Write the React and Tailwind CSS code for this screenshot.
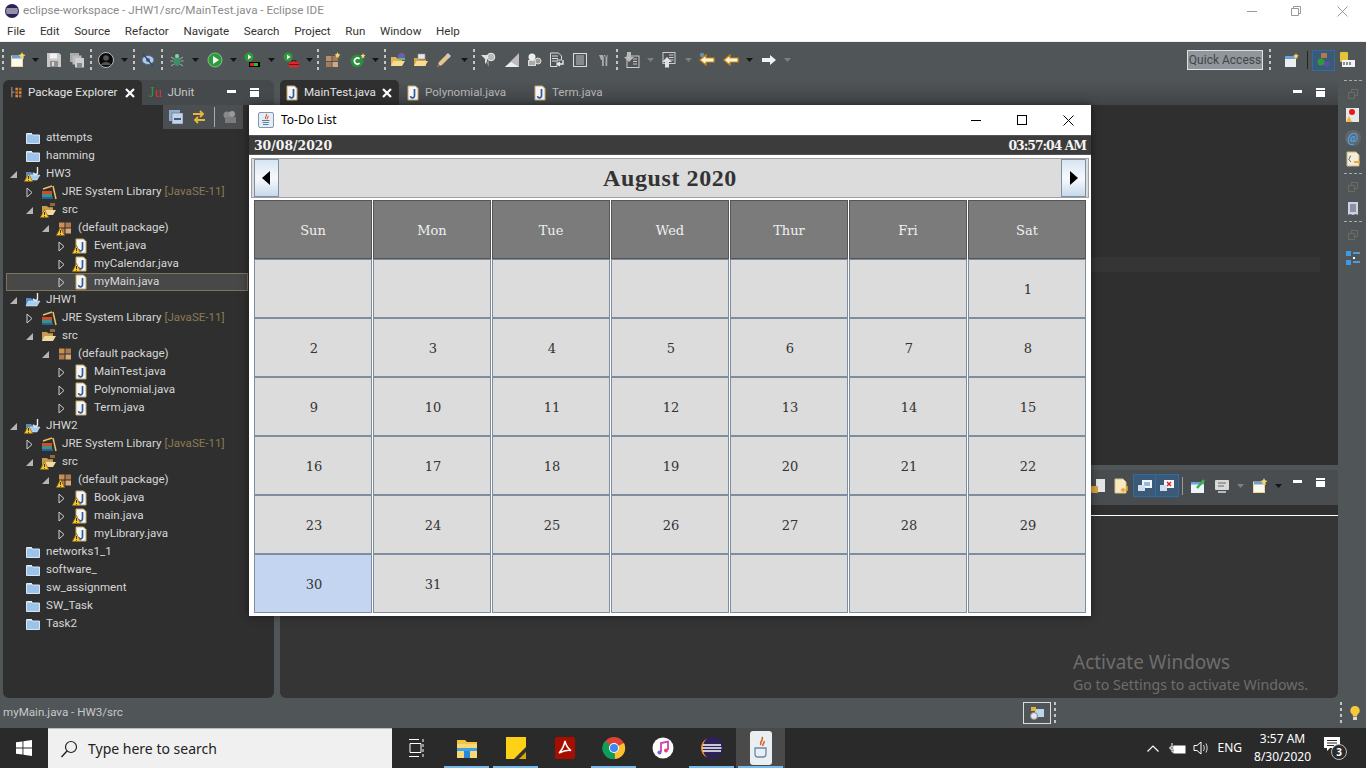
import React from 'react';

// --- small toolbar / tree icons ---
const Svg = ({ children, s = 16 }) => (
  <svg width={s} height={s} viewBox="0 0 16 16" className="block shrink-0">{children}</svg>
);

const NewWin = () => <Svg><rect x="1.5" y="4" width="11" height="10.5" fill="#fdf9e8" stroke="#e8d9a0" /><rect x="2" y="4" width="10" height="2.5" fill="#6aa0dc" /><path d="M12 0l1 2.2L15.5 3 13.4 4.5 14 7l-2-1.4L10 7l.6-2.5L8.5 3l2.500-.8z" fill="#f5d76e" /></Svg>;
const Save = () => <Svg><path d="M1 1h12l2 2v12H1z" fill="#c9c9c9" /><rect x="4" y="1.500" width="7" height="5" fill="#f2f2f2" /><rect x="4" y="9" width="8" height="6" fill="#8f8f8f" /><rect x="6" y="10" width="2" height="4" fill="#ddd" /></Svg>;
const SaveAll = () => <Svg><rect x="1" y="1" width="9" height="9" fill="#aaa" /><rect x="3.500" y="3.500" width="9" height="9" fill="#bbb" /><path d="M6 6h9v9.500H6z" fill="#cfcfcf" /><rect x="8" y="11" width="5" height="4.500" fill="#8a8a8a" /></Svg>;
const User = () => <Svg><circle cx="8" cy="8" r="7.500" fill="#0c0c0c" stroke="#bbb" /><circle cx="8" cy="6" r="2.800" fill="#555" /><path d="M3 13c1-4 9-4 10 0z" fill="#555" /></Svg>;
const Skip = () => <Svg><ellipse cx="8" cy="8" rx="6" ry="4.500" fill="#b9c9e0" stroke="#44658f" /><circle cx="8" cy="8" r="2" fill="#44658f" /><path d="M3 2l10 12" stroke="#2a4a78" strokeWidth="1.300" /></Svg>;
const Bug = () => <Svg><ellipse cx="8" cy="9" rx="3.500" ry="5" fill="#3f8f6a" /><circle cx="8" cy="4" r="2" fill="#8fd0a8" /><path d="M2 5l3 2M14 5l-3 2M1.500 9H4M14.500 9H12M2 14l3-2M14 14l-3-2" stroke="#9fb8a8" /></Svg>;
const Run = () => <Svg><circle cx="8" cy="8" r="7" fill="#2f9a3c" stroke="#7bc47f" /><path d="M6 4l6 4-6 4z" fill="#f3f3f3" /></Svg>;
const Coverage = () => <Svg><circle cx="5" cy="5" r="4.500" fill="#2f9a3c" /><path d="M4 2.500l3.500 2.500L4 7.500z" fill="#eee" /><rect x="5" y="10" width="11" height="5" fill="#000" /><rect x="6" y="11" width="4" height="3" fill="#e02020" /><rect x="10" y="11" width="4" height="3" fill="#21c321" /></Svg>;
const Tool = () => <Svg><circle cx="5" cy="5" r="4.500" fill="#2f9a3c" /><path d="M4 2.500l3.500 2.500L4 7.500z" fill="#eee" /><rect x="6" y="10" width="10" height="5.500" rx="1" fill="#d82a2a" /><path d="M9 10V8.500h4V10M6 12.500h10" stroke="#7a1010" fill="none" /></Svg>;
const NewPkg = () => <Svg><rect x="1" y="4" width="5.500" height="5" fill="#bd8d68" /><rect x="7.500" y="4" width="5.500" height="5" fill="#a87a58" /><rect x="1" y="10" width="5.500" height="5" fill="#a87a58" /><rect x="7.500" y="10" width="5.500" height="5" fill="#d0a888" /><path d="M12.500 0l.9 2 2.100.7-1.800 1.200.5 2.100-1.700-1.200L10.800 6l.5-2.100-1.800-1.200 2.100-.7z" fill="#f5d76e" /></Svg>;
const NewClass = () => <Svg><circle cx="7" cy="9" r="6.500" fill="#2c8f3e" /><path d="M9.500 6.800A3 3 0 1 0 9.500 11.200" fill="none" stroke="#fff" strokeWidth="1.600" /><path d="M13 1l.8 1.800 1.700.7-1.500 1 .4 1.900-1.400-1-1.500 1 .4-1.900-1.400-1 1.800-.7z" fill="#f5d76e" /></Svg>;
const OpenA = () => <Svg><path d="M1 14V5h5l1 1.500h5V14z" fill="#e2b55c" /><path d="M1 14l2.500-5H15l-3 5z" fill="#f7dc94" /><circle cx="11.500" cy="4.500" r="3.500" fill="#6b5fb0" /><rect x="8" y="6" width="7" height="2" fill="#6fb36f" /></Svg>;
const OpenB = () => <Svg><path d="M1 14V6h5l1 1.500h6V14z" fill="#d6a24c" /><path d="M1 14l2.500-5H15l-3 5z" fill="#f7dc94" /><path d="M5 2h7v5H5z" fill="#e8e8e8" stroke="#999" strokeWidth=".6" /></Svg>;
const Pen = () => <Svg><path d="M1 15l2-5 8-8 3 3-8 8z" fill="#e4c58f" /><path d="M10 3l3 3 2-2-3-3z" fill="#c9c9c9" /><path d="M1 15l1.200-3 1.800 1.800z" fill="#7a5b2e" /></Svg>;
const Glass = () => <Svg><path d="M1 3h9l-3 4v3l-2 2V7z" fill="#dedede" /><circle cx="11" cy="5" r="3.800" fill="#b8b8b8" stroke="#eee" /><path d="M6 10l3 5v-6z" fill="#8a8a8a" /></Svg>;
const Wedge = () => <Svg><path d="M1 15L15 1v14z" fill="#bdbdbd" /><path d="M1 15l6-5 8 5z" fill="#efefef" /></Svg>;
const Gears = () => <Svg><circle cx="6" cy="5" r="3.500" fill="#eee" /><rect x="2" y="8" width="8" height="6" fill="#ddd" /><circle cx="12" cy="9" r="3" fill="#999" stroke="#ddd" /><path d="M3 10h6M3 12h6" stroke="#777" /></Svg>;
const DocArrow = () => <Svg><path d="M1.500 1h8l3 3v4H8v6.500H1.500z" fill="#4f5356" stroke="#ddd" /><path d="M3 4h6M3 6.500h6M3 9h4" stroke="#ddd" /><path d="M14 8v4H9M11 10l-2.500 2 2.500 2" fill="none" stroke="#eee" strokeWidth="1.300" /></Svg>;
const Lines = () => <Svg><rect x="1.500" y="1.500" width="13" height="13" fill="none" stroke="#ddd" /><path d="M4 4h8M4 6h8M4 8h8M4 10h8M4 12h8" stroke="#bbb" /></Svg>;
const Pilcrow = () => <Svg><path d="M5 3h8v1.500H5zM7 3v11h1.800V3zM10.500 3v11h1.800V3z" fill="#aaa" /><path d="M4 3h4v5H6z" fill="#aaa" /></Svg>;
const NoteDown = () => <Svg><rect x="3" y="4" width="12" height="11.500" fill="#4f5356" stroke="#ccc" /><path d="M9 7h4M9 9.500h4M9 12h4" stroke="#ccc" /><path d="M3 0h4v5h3l-5 5-5-5h3z" fill="#bbb" /></Svg>;
const NoteUp = () => <Svg><rect x="1" y="0.500" width="12" height="11" fill="#4f5356" stroke="#ccc" /><path d="M7 3h4.500M7 5.500h4.500M7 8h4.500" stroke="#ccc" /><path d="M5 5l5 5H7v5.500H3V10H0z" fill="#e0e0e0" /></Svg>;
const ArrowL = ({ dot }) => <Svg><path d="M1 8l6-5v3h8v4H7v3z" fill="#fff8d8" stroke="#d08a10" strokeWidth="1.200" />{dot && <circle cx="3" cy="3" r="2.200" fill="#6b8fb0" />}</Svg>;
const ArrowR = () => <Svg><path d="M15 8L9 3v3H1v4h8v3z" fill="#f2f2f2" /></Svg>;
const Drop = ({ dark }) => <svg width="7" height="4" viewBox="0 0 7 4" className="block shrink-0"><path d="M0 0h7L3.500 4z" fill={dark ? '#151515' : '#7c8083'} /></svg>;
const Grip = () => <div className="w-[2px] h-[22px] shrink-0 bg-[repeating-linear-gradient(to_bottom,#c4c4c4_0,#c4c4c4_3px,transparent_3px,transparent_6px)]" />;

const JavaCup = ({ s = 16 }) => (
  <Svg s={s}>
    <rect x=".5" y=".5" width="15" height="15" rx="1.500" fill="#e4ecf4" stroke="#7f97b0" />
    <path d="M8.500 2c1 2-2 3-1 5M10 4c.6 1.300-1.300 2-.8 3.200" fill="none" stroke="#d9601a" strokeWidth="1.100" />
    <path d="M4 8.500h7.500M4.500 10.500h6.500M5 12.500h5.500" stroke="#5a7fa5" strokeWidth="1.100" />
  </Svg>
);

const Warn = () => (
  <svg width="9" height="9" viewBox="0 0 9 9" className="absolute -left-[1px] bottom-[0px]">
    <path d="M4.500 .5L8.700 8.500H.3z" fill="#f4c63d" stroke="#8a6410" strokeWidth=".7" />
    <path d="M4.500 3v3M4.500 7v.8" stroke="#4a3200" />
  </svg>
);

const Tree = {
  folder: () => <Svg><path d="M1.500 13.500V3.500h5l1 1.500h7v8.500z" fill="#9cc4ea" stroke="#d9e7f5" /><rect x="2" y="3" width="5" height="1.500" fill="#e5eef7" /></Svg>,
  project: ({ warn }) => <div className="relative"><Svg><path d="M1 14V6h5l1 1.300h5V14z" fill="#4f8fd0" /><path d="M1 14l2.500-5H15l-3 5z" fill="#a6cdf0" stroke="#e8f2fb" strokeWidth=".5" /><path d="M12.500 1v5.500a2 2 0 0 1-4 0" fill="none" stroke="#e4ecf4" strokeWidth="1.400" /></Svg>{warn && <Warn />}</div>,
  jre: () => <Svg><rect x="1" y="7" width="10" height="3" fill="#c94f2a" /><rect x="1" y="10" width="10" height="3" fill="#3d8f8a" /><rect x="1" y="13" width="11" height="2" fill="#2c5f94" /><path d="M2 5l9-3M12 2l3 13" stroke="#e8c265" strokeWidth="1.500" /></Svg>,
  src: ({ warn }) => <div className="relative"><Svg><path d="M1 13V4h5l1 1.300h5V13z" fill="#c99b4e" /><path d="M1 13l2.500-5H15l-3 5z" fill="#f1d9a0" /><path d="M9 1h5v3H9z" fill="#8b6b3e" /></Svg>{warn && <Warn />}</div>,
  pkg: ({ warn }) => <div className="relative"><Svg><rect x="2" y="2.500" width="5.500" height="5" fill="#c98f58" /><rect x="8.500" y="2.500" width="5.500" height="5" fill="#b07a4c" /><rect x="2" y="8.500" width="5.500" height="5" fill="#b07a4c" /><rect x="8.500" y="8.500" width="5.500" height="5" fill="#d9a878" /></Svg>{warn && <Warn />}</div>,
  java: ({ warn }) => <div className="relative"><Svg><path d="M3 1h7.500L13 3.500V15H3z" fill="#f6f6f6" stroke="#c7a968" /><path d="M9.500 4v6.500a2 2 0 0 1-4 .6" fill="none" stroke="#2b5aa0" strokeWidth="1.700" /></Svg>{warn && <Warn />}</div>,
};

const ArrowOpen = () => <svg width="9" height="9" viewBox="0 0 9 9" className="block"><path d="M8 1v7H1z" fill="#b5b5b5" /></svg>;
const ArrowClosed = () => <svg width="7" height="11" viewBox="0 0 7 11" className="block"><path d="M1 1l5 4.500L1 10z" fill="none" stroke="#cfcfcf" /></svg>;

const rows = [
  { l: 0, icon: 'folder', t: 'attempts' },
  { l: 0, icon: 'folder', t: 'hamming' },
  { l: 0, a: 'o', icon: 'project', t: 'HW3', warn: true },
  { l: 1, a: 'c', icon: 'jre', t: 'JRE System Library', x: '[JavaSE-11]' },
  { l: 1, a: 'o', icon: 'src', t: 'src', warn: true },
  { l: 2, a: 'o', icon: 'pkg', t: '(default package)', warn: true },
  { l: 3, a: 'c', icon: 'java', t: 'Event.java', warn: true },
  { l: 3, a: 'c', icon: 'java', t: 'myCalendar.java', warn: true },
  { l: 3, a: 'c', icon: 'java', t: 'myMain.java', sel: true },
  { l: 0, a: 'o', icon: 'project', t: 'JHW1' },
  { l: 1, a: 'c', icon: 'jre', t: 'JRE System Library', x: '[JavaSE-11]' },
  { l: 1, a: 'o', icon: 'src', t: 'src' },
  { l: 2, a: 'o', icon: 'pkg', t: '(default package)' },
  { l: 3, a: 'c', icon: 'java', t: 'MainTest.java' },
  { l: 3, a: 'c', icon: 'java', t: 'Polynomial.java' },
  { l: 3, a: 'c', icon: 'java', t: 'Term.java' },
  { l: 0, a: 'o', icon: 'project', t: 'JHW2', warn: true },
  { l: 1, a: 'c', icon: 'jre', t: 'JRE System Library', x: '[JavaSE-11]' },
  { l: 1, a: 'o', icon: 'src', t: 'src', warn: true },
  { l: 2, a: 'o', icon: 'pkg', t: '(default package)', warn: true },
  { l: 3, a: 'c', icon: 'java', t: 'Book.java', warn: true },
  { l: 3, a: 'c', icon: 'java', t: 'main.java', warn: true },
  { l: 3, a: 'c', icon: 'java', t: 'myLibrary.java', warn: true },
  { l: 0, icon: 'folder', t: 'networks1_1' },
  { l: 0, icon: 'folder', t: 'software_' },
  { l: 0, icon: 'folder', t: 'sw_assignment' },
  { l: 0, icon: 'folder', t: 'SW_Task' },
  { l: 0, icon: 'folder', t: 'Task2' },
];

const indent = ['pl-0', 'pl-[16px]', 'pl-[32px]', 'pl-[48px]'];

const TreeRow = ({ r }) => {
  const Icon = Tree[r.icon];
  return (
    <div className={`flex items-center h-[18px] ${r.sel ? 'bg-[#484848] border border-[#77755f] pl-[47px]' : indent[r.l]}`}>
      <div className="w-[14px] h-[14px] flex items-center justify-center shrink-0">
        {r.a === 'o' && <ArrowOpen />}
        {r.a === 'c' && <ArrowClosed />}
      </div>
      <div className="ml-[5px] mr-[5px]"><Icon warn={r.warn} /></div>
      <span className="text-[#d6d6d6] whitespace-nowrap">{r.t}</span>
      {r.x && <span className="ml-[3px] text-[#8a7a55] whitespace-nowrap">{r.x}</span>}
    </div>
  );
};

const toolbar = [
  ['g', 'ml-[2px]'], [NewWin, 'ml-[6px]'], ['d', 'ml-[6px]', 1], [Save, 'ml-[7px]'], [SaveAll, 'ml-[7px]'], ['g', 'ml-[5px]'],
  [User, 'ml-[6px]'], ['d', 'ml-[7px]', 1], ['g', 'ml-[5px]'], [Skip, 'ml-[5px]'], ['g', 'ml-[5px]'],
  [Bug, 'ml-[6px]'], ['d', 'ml-[7px]', 1], [Run, 'ml-[8px]'], ['d', 'ml-[7px]', 1], [Coverage, 'ml-[7px]'], ['d', 'ml-[8px]', 1], [Tool, 'ml-[8px]'], ['d', 'ml-[7px]', 1], ['g', 'ml-[4px]'],
  [NewPkg, 'ml-[6px]'], [NewClass, 'ml-[9px]'], ['d', 'ml-[6px]', 1], ['g', 'ml-[5px]'],
  [OpenA, 'ml-[4px]'], [OpenB, 'ml-[7px]'], [Pen, 'ml-[7px]'], ['d', 'ml-[9px]', 1], ['g', 'ml-[5px]'],
  [Glass, 'ml-[5px]'], [Wedge, 'ml-[8px]'], [Gears, 'ml-[6px]'], [DocArrow, 'ml-[7px]'], [Lines, 'ml-[7px]'], [Pilcrow, 'ml-[7px]'], ['g', 'ml-[5px]'],
  [NoteDown, 'ml-[6px]'], ['d', 'ml-[7px]'], [NoteUp, 'ml-[8px]'], ['d', 'ml-[7px]'], [ArrowL, 'ml-[7px]', 0, true], [ArrowL, 'ml-[8px]'], ['d', 'ml-[7px]', 1], [ArrowR, 'ml-[8px]'], ['d', 'ml-[7px]'],
];

const MinMax = ({ className = '' }) => (
  <div className={`flex items-center gap-[14px] ${className}`}>
    <div className="w-[9px] h-[3px] bg-white -mt-[3px]" />
    <div className="w-[9px] h-[9px] bg-white border-t-[2px] border-white relative"><div className="absolute left-0 right-0 top-[0px] h-[1px] bg-[#44484b]" /></div>
  </div>
);

const menus = ['File', 'Edit', 'Source', 'Refactor', 'Navigate', 'Search', 'Project', 'Run', 'Window', 'Help'];

const TabClose = () => (
  <svg width="10" height="10" viewBox="0 0 10 10" className="block shrink-0"><path d="M1 1l8 8M9 1l-8 8" stroke="#fff" strokeWidth="2.200" /></svg>
);

const LowerIcons = () => (
  <div className="flex items-center h-[25px] gap-[7px] pl-[810px]">
    <Svg><rect x="6" y="1" width="9" height="13" fill="#e6e6e6" /><rect x="1" y="8" width="7" height="7" rx="1" fill="#d9a441" /></Svg>
    <Svg><path d="M2 1h8l3 3v11H2z" fill="#f7e9c0" stroke="#d8c48a" /><path d="M14 8v4H9M11 10l-2.500 2 2.500 2" fill="none" stroke="#e8a93a" strokeWidth="1.500" /></Svg>
    <div className="-ml-[3px] flex bg-[#3b5a78] border border-[#2e6da4]">
      <div className="w-[22px] h-[21px] flex items-center justify-center border-r border-[#2e6da4]"><Svg><rect x="5" y="2" width="10" height="8" fill="#f2f6fa" /><path d="M7 5h6M7 7h6" stroke="#3b7bbf" /><rect x="1" y="7" width="7" height="6" fill="#d0dff0" /></Svg></div>
      <div className="w-[22px] h-[21px] flex items-center justify-center"><Svg><rect x="5" y="2" width="10" height="8" fill="#f2f6fa" /><path d="M8 4l4 4M12 4l-4 4" stroke="#e02020" strokeWidth="1.500" /><rect x="1" y="7" width="7" height="6" fill="#d0dff0" /></Svg></div>
    </div>
    <div className="-ml-[4px] w-[1px] h-[18px] bg-[#999]" />
    <Svg><rect x="1" y="4" width="13" height="11" fill="#eef3f8" /><rect x="1" y="4" width="13" height="2.500" fill="#6aa0dc" /><path d="M7 10l7-8" stroke="#3fae49" strokeWidth="2.500" /></Svg>
    <div className="ml-[1px]"><Svg><rect x="1" y="2" width="14" height="10" rx="1" fill="#d8d8d8" /><path d="M4 5h8M4 8h6" stroke="#666" /><rect x="4" y="13" width="8" height="2" fill="#bbb" /></Svg></div>
    <Drop />
    <div className="ml-[1px]"><NewWin /></div>
    <Drop dark />
  </div>
);

const days = ['Sun', 'Mon', 'Tue', 'Wed', 'Thur', 'Fri', 'Sat'];
const cells = [...Array(6).fill(''), ...Array.from({ length: 31 }, (_, i) => String(i + 1)), '', '', '', '', ''];

const NavButton = ({ children }) => (
  <div className="w-[25px] h-[38px] border border-[#7e8fa3] bg-[linear-gradient(to_bottom,#d6e4f2,#f4f7fb_45%,#f4f7fb_55%,#c6daec)] flex items-center justify-center">
    {children}
  </div>
);

const TodoWindow = () => (
  <div className="absolute left-[249px] top-[105px] w-[842px] h-[511px] flex flex-col bg-white shadow-[0_0_8px_rgba(0,0,0,0.5)]">
    <div className="h-[30px] flex items-center pl-[9px] bg-white shrink-0 font-['Noto_Sans',sans-serif]">
      <JavaCup />
      <span className="ml-[7px] text-[12px] text-black">To-Do List</span>
      <div className="ml-auto flex items-center">
        <div className="w-[46px] flex justify-center"><div className="w-[10px] h-[1px] bg-black" /></div>
        <div className="w-[46px] flex justify-center"><div className="w-[10px] h-[10px] border border-black" /></div>
        <div className="w-[46px] flex justify-center"><svg width="11" height="11" viewBox="0 0 11 11"><path d="M.5.5l10 10M10.500.5l-10 10" stroke="#000" /></svg></div>
      </div>
    </div>
    <div className="h-[20px] flex items-center justify-between px-[5px] pt-[2px] bg-[#3c3c3c] border-y border-[#555] text-[12.400px] font-bold text-[#f4f4f4] shrink-0 font-['DejaVu_Serif',serif]">
      <span>30/08/2020</span>
      <span className="tracking-[-1px]">03:57:04 AM</span>
    </div>
    <div className="flex-1 mt-[1px] border-t-[1px] border-white px-[1px] pb-[3px] flex flex-col">
      <div className="mx-[1px] mt-[1px] h-[40px] border border-[#a0a0a0] bg-[#dcdcdc] flex items-center justify-between px-[2px] shrink-0">
        <NavButton><svg width="9" height="14" viewBox="0 0 9 14"><path d="M8 0v14L0 7z" fill="#000" /></svg></NavButton>
        <span className="text-[24px] font-bold text-[#333] font-['Liberation_Serif',serif] tracking-[0.6px]">August 2020</span>
        <NavButton><svg width="9" height="14" viewBox="0 0 9 14"><path d="M1 0v14l8-7z" fill="#000" /></svg></NavButton>
      </div>
      <div className="mt-[2px] ml-[4px] w-[833px] grid grid-cols-7 auto-rows-[59px] font-['DejaVu_Serif',serif] text-[13px]">
        {days.map((d) => (
          <div key={d} className="mr-[1px] pt-[2px] border border-[#555] bg-[#7b7b7b] text-[#f0f0f0] flex items-center justify-center">{d}</div>
        ))}
        {cells.map((c, i) => (
          <div key={i} className={`mr-[1px] pt-[2px] pl-[2px] border border-[#7e8e9e] text-[#333] flex items-center justify-center ${c === '30' ? 'bg-[#c3d5f0]' : 'bg-[#dcdcdc]'}`}>{c}</div>
        ))}
      </div>
    </div>
  </div>
);

const RestoreMini = () => (
  <div className="opacity-40"><svg width="10" height="10" viewBox="0 0 10 10" className="block"><path d="M.5 3.500h6v6h-6zM3.500 3V.5h6v6H7" fill="none" stroke="#9c8d7a" /></svg></div>
);
const TrimDash = () => <div className="w-[18px] h-[1px] border-t border-dashed border-[#aaa]" />;

const Trim = () => (
  <div className="w-[26px] shrink-0 flex flex-col items-center pt-[2px]">
    <TrimDash />
    <div className="mt-[8px]"><RestoreMini /></div>
    <div className="mt-[8px]"><Svg><path d="M1 1h13v14H1z" fill="#e8e8e8" /><circle cx="7" cy="5" r="3" fill="#e21b1b" /><path d="M1 15l3-6 3 6z" fill="#eeb942" /></Svg></div>
    <div className="mt-[7px] h-[16px] w-[16px] flex items-center justify-center text-[12px] font-bold italic text-[#4aa3e8] bg-white/10 rounded-full">@</div>
    <div className="mt-[5px]"><Svg><path d="M2 1h9l3 3v11H2z" fill="#f4ecd4" stroke="#c9b98a" /><path d="M6 5C4 5 5 8 4 8s2 3 2 3" fill="none" stroke="#2b5aa0" /><path d="M9 11h6" stroke="#e8a93a" strokeWidth="2" /></Svg></div>
    <div className="mt-[6px]"><TrimDash /></div>
    <div className="mt-[8px]"><RestoreMini /></div>
    <div className="mt-[9px]"><Svg><path d="M3 1h10v13l-2-1-3 1-3-1-2 1z" fill="#cfcfe8" /><path d="M5 4h6M5 6h6M5 8h6M5 10h6" stroke="#555" /></Svg></div>
    <div className="mt-[4px]"><TrimDash /></div>
    <div className="mt-[8px]"><RestoreMini /></div>
    <div className="mt-[10px]"><Svg><rect x="1" y="1" width="5" height="5" fill="#3d9ae8" /><rect x="1" y="10" width="5" height="5" fill="#3d9ae8" /><path d="M8 3h7M8 12h7" stroke="#5ab0f0" strokeWidth="1.500" /><rect x="8" y="7" width="2" height="2" fill="#fff" /></Svg></div>
  </div>
);

const trayIcons = {
  battery: <svg width="17" height="13" viewBox="0 0 17 13"><rect x="5" y="4" width="11" height="7" fill="#fff" stroke="#fff" /><path d="M3 1v4M1 5h4v2H1zM3 7v3h3" stroke="#fff" fill="none" /></svg>,
  sound: <svg width="17" height="14" viewBox="0 0 17 14"><path d="M1 4.500h3l4-3.500v12l-4-3.500H1z" fill="none" stroke="#fff" /><path d="M10.500 4c1 2 1 4 0 6M13 2.500c1.500 3 1.500 6 0 9" fill="none" stroke="#ddd" /></svg>,
};

const taskApps = [
  [<svg key="a" width="22" height="22" viewBox="0 0 22 22"><path d="M1 3h8l2 2h10v16H1z" fill="#f4c244" /><rect x="1" y="7" width="20" height="14" fill="#f8d775" /><rect x="8" y="13" width="6" height="8" fill="#2a88d8" /><rect x="1" y="11" width="20" height="3" fill="#3aa0e8" /></svg>, 'bg-[#76b9ed]'],
  [<svg key="b" width="22" height="22" viewBox="0 0 22 22"><rect x="1" y="0" width="20" height="22" fill="#fcd116" /><path d="M21 10v12H9z" fill="#e0a800" /><path d="M21 10L9 22h5l7-7z" fill="#333" /></svg>, 'bg-[#76b9ed]'],
  [<svg key="c" width="22" height="24" viewBox="0 0 22 24"><rect x="1" y="1" width="20" height="22" rx="2" fill="#a80e00" /><path d="M11 5c-1 5-3 9-6 12 4-2 8-3 12-2.500-3-2-5-5-6-9.500z" fill="none" stroke="#fff" strokeWidth="1.500" /></svg>, ''],
  [<svg key="d" width="24" height="24" viewBox="0 0 24 24"><circle cx="12" cy="12" r="11" fill="#db4437" /><path d="M12 12L22 7a11 11 0 0 1-9 16z" fill="#fbc02d" /><path d="M12 12l1 11A11 11 0 0 1 3 5z" fill="#0f9d58" /><circle cx="12" cy="12" r="5" fill="#fff" /><circle cx="12" cy="12" r="4" fill="#4285f4" /></svg>, 'bg-[#76b9ed]'],
  [<svg key="e" width="22" height="22" viewBox="0 0 22 22"><circle cx="11" cy="11" r="10.500" fill="#fff" /><path d="M9 15V6l7-1.500V13" fill="none" stroke="#d03fb0" strokeWidth="1.800" /><circle cx="7.500" cy="15.500" r="2" fill="#7a5ce0" /><circle cx="14" cy="13.500" r="2" fill="#e8407a" /></svg>, ''],
  [<svg key="f" width="24" height="24" viewBox="0 0 24 24"><circle cx="12" cy="12" r="11.500" fill="#2c2255" /><path d="M1 12A11 11 0 0 1 7 2.500 13 13 0 0 0 7 21.500 11 11 0 0 1 1 12z" fill="#f7941e" /><path d="M3 9h18M2.500 12h19M3 15h18" stroke="#fff" strokeWidth="1.400" /></svg>, 'bg-[#76b9ed]'],
  [<svg key="g" width="24" height="34" viewBox="0 0 24 34"><rect x="1" y="0" width="22" height="34" rx="3" fill="#e8eef2" /><path d="M13 6c2 3-3 5-1 8M15 10c1 2-2 3-1 5" fill="none" stroke="#d9601a" strokeWidth="1.500" /><path d="M6 17h11v6a3 3 0 0 1-3 3H9a3 3 0 0 1-3-3z" fill="none" stroke="#6a88a8" strokeWidth="1.300" /></svg>, 'bg-[#76b9ed]', true],
];

export default function App() {
  return (
    <div className="relative w-[1366px] h-[768px] overflow-hidden flex flex-col bg-[#505558] text-[11.600px] font-['Roboto',sans-serif]">
      <div className="h-[22px] bg-white flex items-center pl-[5px] shrink-0">
        <svg width="14" height="14" viewBox="0 0 14 14" className="block"><circle cx="7" cy="7" r="7" fill="#2c2255" /><path d="M0 7a7 7 0 0 1 2-5 8 8 0 0 0 0 10 7 7 0 0 1-2-5z" fill="#f7941e" /><path d="M1.500 5h11M1 7h12M1.500 9h11" stroke="#fff" /></svg>
        <span className="ml-[4px] text-[#8a8a8a] text-[11.650px]">eclipse-workspace - JHW1/src/MainTest.java - Eclipse IDE</span>
        <div className="ml-auto flex items-center text-[#8a8a8a]">
          <div className="w-[10px] h-[1px] bg-[#999] mr-[34px]" />
          <svg width="10" height="10" viewBox="0 0 10 10" className="mr-[36px]"><path d="M.5 2.500h7v7h-7zM2.500 2V.5h7v7H8" fill="none" stroke="#999" /></svg>
          <svg width="11" height="11" viewBox="0 0 11 11" className="mr-[18px]"><path d="M.5.5l10 10M10.500.5l-10 10" stroke="#999" /></svg>
        </div>
      </div>
      <div className="h-[20px] bg-white flex items-center pl-[7px] gap-[14.700px] text-[#333] text-[12px] border-b border-[#eee] shrink-0">
        {menus.map((m) => <span key={m} className="text-[11.600px]">{m}</span>)}
      </div>

      <div className="h-[36px] flex items-center bg-[#505558] shrink-0 relative">
        {toolbar.map(([C, m, dark, dot], i) => {
          if (C === 'g') return <div key={i} className={m}><Grip /></div>;
          if (C === 'd') return <div key={i} className={m}><Drop dark={!!dark} /></div>;
          return <div key={i} className={m}><C dot={dot} /></div>;
        })}
        <div className="ml-auto flex items-center pr-[11px]">
          <div className="w-[76px] h-[20px] border border-[#e0e0e0] bg-[#8f969c] text-[#454545] text-[12px] flex items-center justify-center mr-[6px]">Quick Access</div>
          <Grip />
          <div className="ml-[13px] mr-[7px]"><Svg><rect x="1" y="4" width="11" height="11" fill="#eee" /><rect x="1" y="4" width="11" height="3" fill="#6aa0dc" /><path d="M12 1l.9 2 2 .8-1.800 1.100.4 2-1.500-1-1.600 1 .5-2-1.800-1.100 2-.8z" fill="#f5d76e" /></Svg></div>
          <div className="w-[1px] h-[18px] bg-[#222]" />
          <div className="ml-[4px] w-[23px] h-[21px] bg-[#3b5a78] border border-[#2e6da4] flex items-center justify-center"><Svg><rect x="5" y="1" width="6" height="5" fill="#b07a4c" /><circle cx="5" cy="10" r="3.500" fill="#2f9a3c" /><circle cx="11" cy="12" r="3" fill="#5b4fa0" /></Svg></div>
          <div className="ml-[4px]"><Svg><rect x="1" y="0" width="8" height="10" rx="1" fill="#e3c23c" /><rect x="3" y="8" width="13" height="7" fill="#f4f4f4" /><path d="M5 10v3M8 10v3M11 10v3" stroke="#222" /></Svg></div>
        </div>
      </div>

      <div className="h-[620px] flex shrink-0">
        {/* left view */}
        <div className="ml-[3px] w-[271px] mt-[2px] flex flex-col rounded-[6px] overflow-hidden">
          <div className="h-[25px] flex items-stretch bg-[#45494c] shrink-0">
            <div className="w-[139px] bg-[#2f2f2f] rounded-t-[5px] flex items-center pl-[8px] gap-[3px] text-[#e2e2e2]">
              <Svg s={14}><path d="M1 1v12" stroke="#aaa" /><path d="M1 7h3" stroke="#aaa" /><rect x="5" y="2" width="3" height="3" fill="#d68642" /><rect x="9" y="2" width="3" height="3" fill="#b86e32" /><rect x="5" y="6" width="3" height="3" fill="#b86e32" /><rect x="9" y="6" width="3" height="3" fill="#d68642" /><rect x="5" y="10" width="3" height="3" fill="#d68642" /><rect x="9" y="10" width="3" height="3" fill="#b86e32" /></Svg>
              <span className="whitespace-nowrap">Package Explorer</span>
              <div className="ml-auto mr-[7px]"><TabClose /></div>
            </div>
            <div className="flex items-center pl-[7px] gap-[6px] text-[#c8c8c8]">
              <span className="font-['Liberation_Serif',serif] text-[14px] leading-none"><span className="text-[#2f9a3c]">J</span><span className="text-[#d83232]">u</span></span>
              <span>JUnit</span>
            </div>
            <MinMax className="ml-auto mr-[15px]" />
          </div>
          <div className="flex-1 bg-[#2f2f2f]">
            <div className="h-[24px] flex justify-end pr-[31px]">
              <div className="w-[80px] h-[24px] bg-[#4b4f52] flex items-center pl-[5px] gap-[7px]">
                <Svg><rect x="1" y="1" width="11" height="11" fill="#8faed0" /><rect x="4" y="4" width="11" height="11" fill="#c3d5ea" stroke="#557" strokeWidth=".5" /><path d="M6 10h7" stroke="#234" strokeWidth="1.500" /></Svg>
                <Svg><path d="M2 5h10M9 2l3 3-3 3M14 11H4M7 8l-3 3 3 3" fill="none" stroke="#e8b73a" strokeWidth="1.800" /></Svg>
                <div className="w-[1px] h-[20px] bg-[#aaa]" />
                <Svg><circle cx="5" cy="6" r="3.500" fill="#888" /><circle cx="10" cy="5" r="3" fill="#9a9a9a" /><rect x="3" y="8" width="11" height="6" fill="#7c7c7c" /></Svg>
              </div>
            </div>
            <div className="pl-[3px] pr-[26px]">
              {rows.map((r, i) => <TreeRow key={i} r={r} />)}
            </div>
          </div>
        </div>

        {/* editor + console */}
        <div className="ml-[6px] w-[1058px] mt-[2px] flex flex-col gap-[5px]">
          <div className="h-[385px] flex flex-col">
            <div className="h-[25px] flex items-stretch bg-[linear-gradient(to_bottom,#505558,#414447)] shrink-0">
              <div className="w-[119px] bg-[#2f2f2f] rounded-t-[5px] flex items-center pl-[4px] gap-[4px] text-[#e2e2e2]">
                <Tree.java />
                <span>MainTest.java</span>
                <div className="ml-auto mr-[7px]"><TabClose /></div>
              </div>
              <div className="w-[133px] flex items-center pl-[6px] gap-[4px] text-[#b4b4b4]"><Tree.java /><span>Polynomial.java</span></div>
              <div className="flex items-center gap-[4px] text-[#b4b4b4]"><Tree.java /><span>Term.java</span></div>
              <MinMax className="ml-auto mr-[13px]" />
            </div>
            <div className="flex-1 bg-[#2f2f2f] flex flex-col pt-[2px]">
              <div className="mt-[150px] h-[15px] bg-[#353535] mr-[18px]" />
            </div>
          </div>
          <div className="flex-1 flex flex-col rounded-b-[6px] overflow-hidden bg-[#353535]">
            <div className="h-[35px] flex bg-[#494d50] relative">
              <div className="flex-1 pt-[3px]"><LowerIcons /></div>
              <MinMax className="mr-[13px] mb-[10px]" />
            </div>
            <div className="h-[10px] bg-[#2f2f2f]" />
            <div className="h-[1px] bg-white" />
          </div>
        </div>
        <div className="ml-[2px]"><Trim /></div>
      </div>

      <div className="h-[30px] bg-[#505558] flex items-center shrink-0 pl-[3px] text-[#c8c8c8]">
        <span>myMain.java - HW3/src</span>
        <div className="ml-auto flex items-center">
          <div className="w-[28px] h-[22px] border border-[#ddd] flex items-center justify-center mr-[3px]"><Svg><rect x="6" y="4" width="9" height="8" fill="#bcd4ec" /><circle cx="5" cy="11" r="3.500" fill="#dfe8f0" stroke="#888" /><path d="M2 2h5v4H2z" fill="#e3b23c" /></Svg></div>
          <Grip />
          <div className="w-[284px]" />
          <Grip />
          <div className="ml-[5px] mr-[3px]"><Svg><path d="M8 1a4.500 4.500 0 0 0-3 8c.8.800 1 1.500 1 2.500h4c0-1 .2-1.700 1-2.500a4.500 4.500 0 0 0-3-8z" fill="#f5c93b" /><rect x="6" y="12" width="4" height="3" fill="#d8d8d8" /></Svg></div>
        </div>
      </div>

      {/* windows taskbar */}
      <div className="h-[40px] bg-[#2a2a2a] flex items-stretch shrink-0 text-white font-['Noto_Sans',sans-serif]">
        <div className="w-[48px] flex items-center justify-center">
          <svg width="16" height="16" viewBox="0 0 16 16"><path d="M0 2.300L6.500 1.400V7.500H0zM7.400 1.300L16 0V7.500H7.400zM0 8.400H6.500V14.600L0 13.700zM7.400 8.400H16V16L7.400 14.700z" fill="#fff" /></svg>
        </div>
        <div className="w-[344px] bg-[#f0f0f0] flex items-center pl-[12px] text-[#222] text-[14px] border-t border-[#bbb]">
          <svg width="18" height="18" viewBox="0 0 18 18"><circle cx="11" cy="7" r="5.500" fill="none" stroke="#222" strokeWidth="1.200" /><path d="M7 11l-5.500 6" stroke="#222" strokeWidth="1.400" /></svg>
          <span className="ml-[10px]">Type here to search</span>
        </div>
        <div className="w-[50px] flex items-center justify-center">
          <svg width="16" height="18" viewBox="0 0 16 18"><path d="M0 .5h10M0 17.500h10M1 4.500h11v9H1zM14 0v3M14 5v3M14 10v3M14 15v3" fill="none" stroke="#fff" /></svg>
        </div>
        {taskApps.map(([icon, bar, active], i) => (
          <div key={i} className={`w-[49px] flex flex-col items-center justify-center relative ${active ? 'bg-[#4a4a4a]' : ''}`}>
            {icon}
            {bar && <div className={`absolute bottom-0 left-[2px] right-[2px] h-[2px] ${bar}`} />}
          </div>
        ))}
        <div className="ml-auto flex items-center pr-[13px]">
          <svg width="12" height="7" viewBox="0 0 12 7" className="mr-[10px]"><path d="M.5 6.500L6 1l5.500 5.500" fill="none" stroke="#fff" strokeWidth="1.200" /></svg>
          <div className="mr-[7px]">{trayIcons.battery}</div>
          <div className="mr-[7px]">{trayIcons.sound}</div>
          <span className="text-[12px] mr-[12px]">ENG</span>
          <div className="flex flex-col items-center leading-[18px] text-[12px] mr-[13px]">
            <span>3:57 AM</span>
            <span>8/30/2020</span>
          </div>
          <div className="relative w-[24px] h-[24px] mr-[5px]">
            <svg width="16" height="15" viewBox="0 0 16 15" className="absolute left-0 top-[1px]"><path d="M0 0h16v11H6l-3 3v-3H0z" fill="#fff" /><path d="M3 3.500h10M3 6h10M3 8.500h7" stroke="#2a2a2a" /></svg>
            <div className="absolute left-[7px] top-[8px] w-[16px] h-[16px] rounded-full border border-[#bbb] bg-[#2a2a2a] flex items-center justify-center text-[10px] font-bold">3</div>
          </div>
        </div>
      </div>

      <TodoWindow />

      <div className="absolute left-[1073px] top-[649px] text-[#6d6d6d] pointer-events-none font-['Noto_Sans',sans-serif]">
        <div className="text-[19px] leading-[26px]">Activate Windows</div>
        <div className="text-[14.200px] leading-[20px]">Go to Settings to activate Windows.</div>
      </div>
    </div>
  );
}
